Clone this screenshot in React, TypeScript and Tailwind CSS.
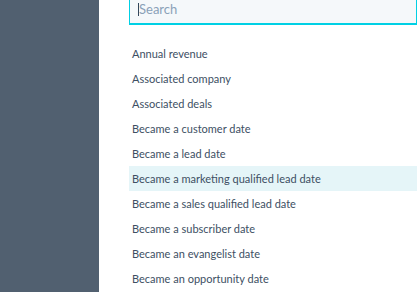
import React from "react";

const items = [
  "Annual revenue",
  "Associated company",
  "Associated deals",
  "Became a customer date",
  "Became a lead date",
  "Became a marketing qualified lead date",
  "Became a sales qualified lead date",
  "Became a subscriber date",
  "Became an evangelist date",
  "Became an opportunity date",
];

export default function App() {
  return (
    <div
      className="flex w-[417px] h-[292px] overflow-hidden bg-white"
      style={{ fontFamily: "Lato, 'Open Sans', sans-serif" }}
    >
      <aside className="w-[99px] shrink-0 bg-[#516070]" />
      <main className="flex-1 pl-[30px] min-w-0">
        <div className="-mt-[15px] h-[40px] bg-[#f5f8fa] border border-[#00d0e4] border-b-2 flex items-end pb-[6px] pl-[8px]">
          <span className="w-px h-[13px] bg-[#33475b] mb-[1px]" />
          <span className="text-[13px] text-[#8aa1b8] leading-[16px]">Search</span>
        </div>
        <ul className="mt-[16px]">
          {items.map((t, i) => (
            <li
              key={t}
              className={`h-[25px] flex items-center pl-[3px] pt-[2px] text-[11px] text-[#3d4f63] whitespace-nowrap ${
                i === 5 ? "bg-[#e5f5f8]" : ""
              }`}
            >
              {t}
            </li>
          ))}
        </ul>
      </main>
    </div>
  );
}
